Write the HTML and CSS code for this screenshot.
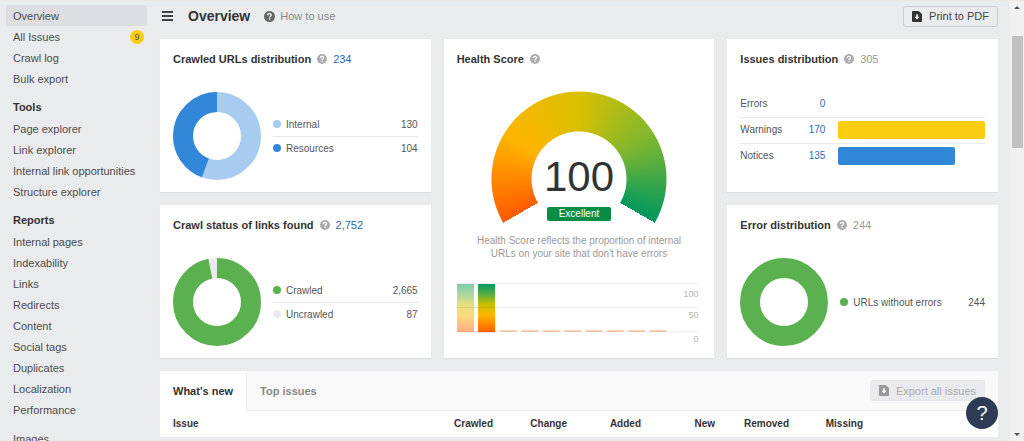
FILE: index.html
```html
<!DOCTYPE html>
<html lang="en">
<head>
<meta charset="utf-8">
<title>Site Audit – Overview</title>
<link rel="stylesheet" href="styles.css">
</head>
<body>
<svg class="sprite" aria-hidden="true">
  <symbol id="help" viewBox="0 0 12 12">
    <circle cx="6" cy="6" r="6" fill="currentColor"/>
    <path d="M4.1 4.7C4.1 3.5 4.9 2.8 6 2.8s1.900.7 1.900 1.700C7.900 5.700 6.100 5.800 6.100 7.200" fill="none" stroke="#fff" stroke-width="1.4"/>
    <rect x="5.300" y="8" width="1.500" height="1.500" fill="#fff"/>
  </symbol>
  <symbol id="download" viewBox="0 0 10 11">
    <path d="M1 0h5.600L10 3v7a1 1 0 0 1-1 1H1a1 1 0 0 1-1-1V1a1 1 0 0 1 1-1z" fill="currentColor"/>
    <path d="M4.200 3.200h1.600v2.600h1.600L5 8.600 2.600 5.800h1.600z" fill="#fff"/>
  </symbol>
</svg>
<div class="app">
  <nav class="sidebar">
    <ul class="nav-group">
      <li><a class="nav-item active" href="#">Overview</a></li>
      <li><a class="nav-item" href="#">All Issues <span class="count">9</span></a></li>
      <li><a class="nav-item" href="#">Crawl log</a></li>
      <li><a class="nav-item" href="#">Bulk export</a></li>
    </ul>
    <h2 class="nav-title">Tools</h2>
    <ul class="nav-group">
      <li><a class="nav-item" href="#">Page explorer</a></li>
      <li><a class="nav-item" href="#">Link explorer</a></li>
      <li><a class="nav-item" href="#">Internal link opportunities</a></li>
      <li><a class="nav-item" href="#">Structure explorer</a></li>
    </ul>
    <h2 class="nav-title">Reports</h2>
    <ul class="nav-group">
      <li><a class="nav-item" href="#">Internal pages</a></li>
      <li><a class="nav-item" href="#">Indexability</a></li>
      <li><a class="nav-item" href="#">Links</a></li>
      <li><a class="nav-item" href="#">Redirects</a></li>
      <li><a class="nav-item" href="#">Content</a></li>
      <li><a class="nav-item" href="#">Social tags</a></li>
      <li><a class="nav-item" href="#">Duplicates</a></li>
      <li><a class="nav-item" href="#">Localization</a></li>
      <li><a class="nav-item" href="#">Performance</a></li>
    </ul>
    <ul class="nav-group">
      <li><a class="nav-item" href="#">Images</a></li>
    </ul>
  </nav>

  <main class="main">
    <header class="topbar">
      <button class="menu" aria-label="Toggle menu"><span></span><span></span><span></span></button>
      <h1 class="page-title">Overview</h1>
      <a class="how-to" href="#"><svg class="how-icon"><use href="#help"/></svg>How to use</a>
      <button class="btn"><svg class="btn-icon"><use href="#download"/></svg>Print to PDF</button>
    </header>

    <div class="cards">
      <section class="card">
        <h2 class="card-title">Crawled URLs distribution <svg class="hint"><use href="#help"/></svg> <a class="total" href="#">234</a></h2>
        <div class="donut-row">
          <svg class="donut" viewBox="0 0 88 88">
            <circle cx="44" cy="44" r="34" class="ring light-blue"/>
            <circle cx="44" cy="44" r="34" class="ring blue" pathLength="234" stroke-dasharray="104 130" stroke-dashoffset="-130"/>
          </svg>
          <dl class="legend">
            <div class="legend-row"><dt><i class="dot light-blue"></i>Internal</dt><dd>130</dd></div>
            <div class="legend-row"><dt><i class="dot blue"></i>Resources</dt><dd>104</dd></div>
          </dl>
        </div>
      </section>

      <section class="card card-tall">
        <h2 class="card-title">Health Score <svg class="hint"><use href="#help"/></svg></h2>
        <div class="gauge">
          <div class="gauge-arc"></div>
          <div class="gauge-value">100</div>
          <div class="gauge-label">Excellent</div>
        </div>
        <p class="gauge-note">Health Score reflects the proportion of internal URLs on your site that don't have errors</p>
        <svg class="history" viewBox="0 0 244 65" role="img" aria-label="Health Score history">
          <defs>
            <linearGradient id="score" x1="0" y1="0" x2="0" y2="1">
              <stop offset="0" stop-color="#009a60"/>
              <stop offset=".22" stop-color="#5cae40"/>
              <stop offset=".42" stop-color="#c8c000"/>
              <stop offset=".65" stop-color="#ffb400"/>
              <stop offset="1" stop-color="#ff5e00"/>
            </linearGradient>
          </defs>
          <path d="M-1 3.500h241M-1 27.500h241M-1 51.500h241" stroke="#ededed"/>
          <rect x="0" y="4" width="17" height="48" fill="#fff"/>
          <rect x="0" y="4" width="17" height="48" fill="url(#score)" opacity=".5"/>
          <rect x="21" y="4" width="17" height="48" fill="url(#score)"/>
          <path d="M0 27.500h38M0 51.500h38" stroke="#000" stroke-opacity=".07"/>
          <path d="M43 51h16.500M64.300 51h16.500M85.700 51h16.500M107 51h16.500M128.300 51h16.500M149.700 51h16.500M171 51h16.500M192.300 51h16.500" stroke="#f3c3a2" stroke-width="1.600"/>
          <text class="axis" x="241" y="17">100</text>
          <text class="axis" x="241" y="38">50</text>
          <text class="axis" x="241" y="62">0</text>
        </svg>
      </section>

      <section class="card">
        <h2 class="card-title">Issues distribution <svg class="hint"><use href="#help"/></svg> <span class="total muted">305</span></h2>
        <table class="bars">
          <tr><th scope="row">Errors</th><td class="num"><a href="#">0</a></td><td></td></tr>
          <tr><th scope="row">Warnings</th><td class="num"><a href="#">170</a></td><td><div class="bar yellow" style="width:100%"></div></td></tr>
          <tr><th scope="row">Notices</th><td class="num"><a href="#">135</a></td><td><div class="bar blue" style="width:79.4%"></div></td></tr>
        </table>
      </section>

      <section class="card">
        <h2 class="card-title">Crawl status of links found <svg class="hint"><use href="#help"/></svg> <a class="total" href="#">2,752</a></h2>
        <div class="donut-row">
          <svg class="donut" viewBox="0 0 88 88">
            <circle cx="44" cy="44" r="34" class="ring grey"/>
            <circle cx="44" cy="44" r="34" class="ring green" pathLength="2752" stroke-dasharray="2665 87"/>
          </svg>
          <dl class="legend">
            <div class="legend-row"><dt><i class="dot green"></i>Crawled</dt><dd>2,665</dd></div>
            <div class="legend-row"><dt><i class="dot grey"></i>Uncrawled</dt><dd>87</dd></div>
          </dl>
        </div>
      </section>

      <section class="card">
        <h2 class="card-title">Error distribution <svg class="hint"><use href="#help"/></svg> <span class="total muted">244</span></h2>
        <div class="donut-row">
          <svg class="donut" viewBox="0 0 88 88"><circle cx="44" cy="44" r="34" class="ring green"/></svg>
          <dl class="legend">
            <div class="legend-row"><dt><i class="dot green"></i>URLs without errors</dt><dd>244</dd></div>
          </dl>
        </div>
      </section>
    </div>

    <section class="panel">
      <div class="tabs">
        <button class="tab selected">What's new</button>
        <button class="tab">Top issues</button>
        <div class="tabs-rest">
          <button class="btn btn-disabled" disabled><svg class="btn-icon"><use href="#download"/></svg>Export all issues</button>
        </div>
      </div>
      <table class="issues">
        <colgroup><col class="col-issue"><col class="col-num"><col class="col-num"><col class="col-num"><col class="col-num"><col class="col-num"><col class="col-num"><col></colgroup>
        <thead>
          <tr><th>Issue</th><th>Crawled</th><th>Change</th><th>Added</th><th>New</th><th>Removed</th><th>Missing</th><td></td></tr>
        </thead>
      </table>
    </section>
  </main>

  <div class="scrollbar" aria-hidden="true">
    <i class="arrow up"></i>
    <div class="track"><div class="thumb"></div></div>
    <i class="arrow down"></i>
  </div>
</div>
<button class="help-button" aria-label="Help">?</button>
</body>
</html>
```
FILE: styles.css
```css
* { box-sizing: border-box; }

body {
  margin: 0;
  background: #eaebed;
  color: #555;
  font: 11px/14px "Liberation Sans", Arial, sans-serif;
}

h1, h2, p, ul, dl, dd { margin: 0; padding: 0; }
ul { list-style: none; }
a { color: inherit; text-decoration: none; }
button { font: inherit; cursor: pointer; }
.sprite { display: none; }

.app {
  display: flex;
  height: 100vh;
  overflow: hidden;
  border-top: 1px solid #ebe8e1;
}

/* Sidebar */
.sidebar {
  flex: 0 0 160px;
  padding: 4px 13px 0 6px;
}
.nav-group { margin-bottom: 8px; }
.nav-item {
  display: flex;
  align-items: center;
  justify-content: space-between;
  width: 141px;
  height: 21px;
  padding: 0 3px 0 7px;
  border-radius: 3px;
  color: #4c4c4c;
  white-space: nowrap;
}
.nav-item.active { background: #dddee2; }
.nav-title {
  padding-left: 7px;
  color: #333;
  font-size: 11px;
  line-height: 21px;
}
.count {
  width: 14px;
  height: 14px;
  border-radius: 50%;
  background: #facd12;
  color: #555;
  font-size: 9px;
  text-align: center;
}

/* Main column */
.main {
  flex: 1;
  min-width: 0;
  padding-right: 12px;
}
.topbar {
  display: flex;
  align-items: center;
  height: 38px;
  padding: 4px 0 12px;
}
.menu {
  display: flex;
  flex-direction: column;
  gap: 2px;
  width: 13px;
  padding: 0 0 0 2px;
  border: 0;
  background: none;
}
.menu span { height: 2px; background: #444; }
.page-title {
  margin-left: 15px;
  color: #333;
  font-size: 14px;
  line-height: 20px;
}
.how-to {
  display: flex;
  align-items: center;
  gap: 5px;
  margin: 0 auto 0 14px;
  color: #888;
}
.how-icon { width: 11px; height: 11px; color: #666; }

.btn {
  display: flex;
  align-items: center;
  gap: 7px;
  height: 21px;
  padding: 0 8px;
  border: 1px solid #cdced1;
  border-radius: 3px;
  background: transparent;
  color: #444;
}
.btn-icon { width: 10px; height: 11px; color: #333; }
.btn-disabled {
  border-color: #e6e7ea;
  background: #e9eaed;
  color: #aaa;
  cursor: default;
}
.btn-disabled .btn-icon { color: #999; }

/* Cards */
.cards {
  display: grid;
  grid-template-columns: repeat(3, minmax(0, 1fr));
  grid-auto-rows: 1fr;
  gap: 13px;
}
.card {
  padding: 13px 13px 12px;
  background: #fff;
  box-shadow: 0 1px 1px rgba(0, 0, 0, .06);
}
.card-tall { grid-row: span 2; }
.card-title {
  display: flex;
  align-items: center;
  gap: 6px;
  color: #333;
  font-size: 11px;
  line-height: 14px;
  white-space: nowrap;
}
.hint { width: 10px; height: 10px; color: #adadad; }
.total { color: #3069b5; font-weight: normal; }
.total.muted { color: #999; }

.donut-row {
  display: flex;
  align-items: center;
  gap: 12px;
  margin-top: 26px;
}
.donut { flex: none; width: 88px; height: 88px; }
.ring {
  fill: none;
  stroke-width: 20px;
  transform: rotate(-90deg);
  transform-origin: center;
}
.light-blue { stroke: #a8ccef; background: #a8ccef; }
.blue { stroke: #3287d8; background: #3287d8; }
.green { stroke: #5bb14f; background: #5bb14f; }
.grey { stroke: #ebebed; background: #ebebed; }
.yellow { background: #facd12; }

.legend { flex: 1; font-size: 10px; }
.legend-row {
  display: flex;
  justify-content: space-between;
  line-height: 23px;
  white-space: nowrap;
}
.legend-row + .legend-row { border-top: 1px solid #e6e6e6; }
.legend dt { display: flex; align-items: center; gap: 5px; }
.dot { width: 8px; height: 8px; border-radius: 50%; }

.bars {
  width: 100%;
  margin-top: 25px;
  border-collapse: collapse;
  table-layout: fixed;
  font-size: 10px;
}
.bars th, .bars td { height: 26px; padding: 0; }
.bars th { width: 55px; font-weight: normal; text-align: left; }
.bars .num { width: 43px; padding-right: 13px; color: #3069b5; text-align: right; }
.bars tr + tr { border-top: 1px solid #ececec; }
.bar { height: 18px; border-radius: 2px; }

/* Health score */
.gauge {
  display: grid;
  justify-items: center;
  grid-template-rows: 62px 48px 6px 14px;
  width: 176px;
  margin: 25px auto 0;
}
.gauge-arc {
  grid-area: 1 / 1 / 5 / 2;
  width: 176px;
  height: 132px;
  background: conic-gradient(from 240deg at 50% 88px, #ff5a00 0deg, #ffb400 60deg, #d9c000 120deg, #7fb72f 180deg, #00985f 240deg, transparent 240deg);
  -webkit-mask: radial-gradient(circle at 50% 88px, transparent 47px, #000 48px, #000 87px, transparent 88px);
  mask: radial-gradient(circle at 50% 88px, transparent 47px, #000 48px, #000 87px, transparent 88px);
}
.gauge-value {
  grid-area: 2 / 1;
  color: #333;
  font-size: 42px;
  line-height: 48px;
}
.gauge-label {
  grid-area: 4 / 1;
  width: 64px;
  border-radius: 2px;
  background: #078d45;
  color: #fff;
  font-size: 10px;
  line-height: 14px;
  text-align: center;
}
.gauge-note {
  max-width: 220px;
  margin: 13px auto 20px;
  color: #999;
  font-size: 10px;
  line-height: 13px;
  text-align: center;
}
.history { display: block; width: 100%; overflow: visible; }
.axis { fill: #b5b5b5; font-size: 9px; text-anchor: end; }

/* Issues panel */
.panel { margin-top: 13px; background: #fff; }
.tabs { display: flex; height: 40px; }
.tab {
  padding: 0 13px;
  border: 0;
  border-bottom: 1px solid #ececec;
  background: #f9f9f9;
  color: #888;
  font-weight: bold;
}
.tab.selected {
  border-right: 1px solid #ececec;
  border-bottom-color: #fff;
  background: #fff;
  color: #333;
}
.tabs-rest {
  display: flex;
  flex: 1;
  align-items: center;
  justify-content: flex-end;
  padding-right: 13px;
  border-bottom: 1px solid #ececec;
  background: #f9f9f9;
}
.issues {
  width: 100%;
  border-collapse: collapse;
  table-layout: fixed;
  color: #333;
  font-size: 10px;
}
.col-issue { width: 259px; }
.col-num { width: 74px; }
.issues th {
  height: 26px;
  padding: 0;
  border-bottom: 1px solid #ececec;
  text-align: right;
}
.issues td { border-bottom: 1px solid #ececec; }
.issues th:first-child { padding-left: 13px; text-align: left; }

/* Scrollbar */
.scrollbar {
  display: flex;
  flex: 0 0 14px;
  flex-direction: column;
  align-items: center;
  padding: 5px 0;
  background: #f1f1f1;
}
.arrow { border: 3px solid transparent; }
.up { border-top: 0; border-bottom-color: #555; }
.down { border-bottom: 0; border-top-color: #555; }
.track { flex: 1; padding-top: 27px; }
.thumb { width: 11px; height: 112px; background: #c1c1c1; }

.help-button {
  position: fixed;
  right: 26px;
  bottom: 12px;
  width: 32px;
  height: 32px;
  padding: 0;
  border: 0;
  border-radius: 50%;
  background: #2d3b55;
  color: #fff;
  font-size: 20px;
  line-height: 32px;
}
```
